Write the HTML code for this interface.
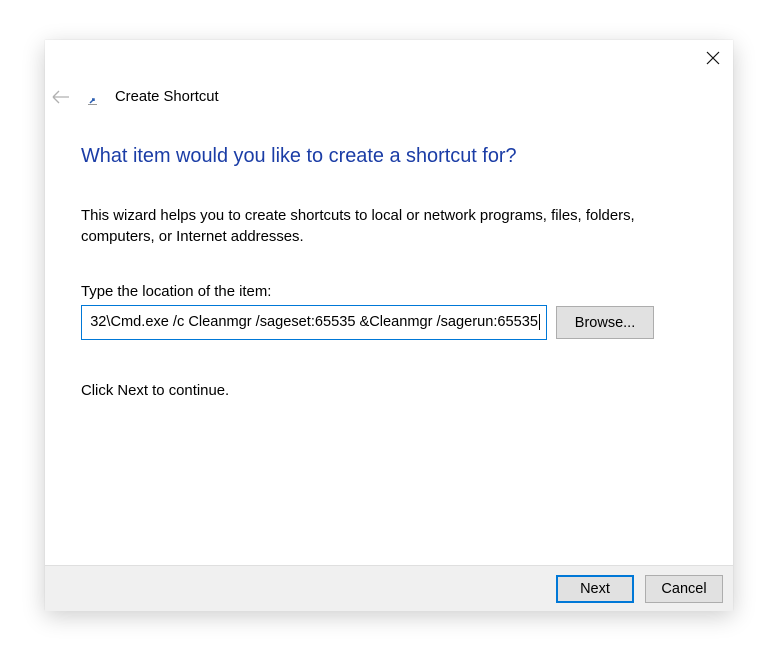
<!DOCTYPE html>
<html><head><style>
body{margin:0;width:776px;height:650px;background:#fff;font-family:"Liberation Sans",sans-serif;position:relative;overflow:hidden}
.dlg{position:absolute;left:45px;top:40px;width:688px;height:570px;background:#fff;box-shadow:0 6px 22px rgba(0,0,0,0.2),0 0 1px rgba(0,0,0,0.15)}
.t{position:absolute;white-space:nowrap;color:#000;font-size:14.9px}
.foot{position:absolute;left:0;top:525px;width:688px;height:45px;background:#f0f0f0;border-top:1px solid #dfdfdf}
.btn{position:absolute;background:#e1e1e1;border:1px solid #adadad;font-size:14.5px;text-align:center;box-sizing:border-box;color:#000}
</style></head><body>
<div class="dlg">
 <svg style="position:absolute;left:661px;top:11px" width="14" height="14"><path d="M1 1L13 13M13 1L1 13" stroke="#111" stroke-width="1.2"/></svg>
 <svg style="position:absolute;left:7px;top:50px" width="18" height="14"><path d="M1 7H17M1 7L7 1M1 7L7 13" stroke="#b0b0b0" stroke-width="1.3" fill="none"/></svg>
 <svg style="position:absolute;left:43px;top:56px" width="10" height="10"><rect x="0" y="8" width="9" height="1" fill="#999"/><path d="M2 7L6 3M4 3H6V5" stroke="#2a5db0" stroke-width="1.5" fill="none"/></svg>
 <div class="t" style="left:70px;top:49px;font-size:14.8px">Create Shortcut</div>
 <div class="t" style="left:36px;top:105px;font-size:19.9px;color:#1b3da6">What item would you like to create a shortcut for?</div>
 <div class="t" style="left:36px;top:168px">This wizard helps you to create shortcuts to local or network programs, files, folders,</div>
 <div class="t" style="left:36px;top:189px">computers, or Internet addresses.</div>
 <div class="t" style="left:36px;top:244px">Type the location of the item:</div>
 <div style="position:absolute;left:36px;top:265px;width:466px;height:35px;border:1px solid #0078d7;box-sizing:border-box;overflow:hidden">
  <div class="t" style="right:6px;top:8px;font-size:14.6px">32\Cmd.exe /c Cleanmgr /sageset:65535 &amp;Cleanmgr /sagerun:65535<span style="border-left:1px solid #000;margin-left:1px"></span></div>
 </div>
 <div class="btn" style="left:511px;top:266px;width:98px;height:33px;line-height:32px">Browse...</div>
 <div class="t" style="left:36px;top:343px">Click Next to continue.</div>
 <div class="foot">
  <div class="btn" style="left:511px;top:9px;width:78px;height:28px;line-height:25px;border:2px solid #0078d7">Next</div>
  <div class="btn" style="left:600px;top:9px;width:78px;height:28px;line-height:27px">Cancel</div>
 </div>
</div>
</body></html>
